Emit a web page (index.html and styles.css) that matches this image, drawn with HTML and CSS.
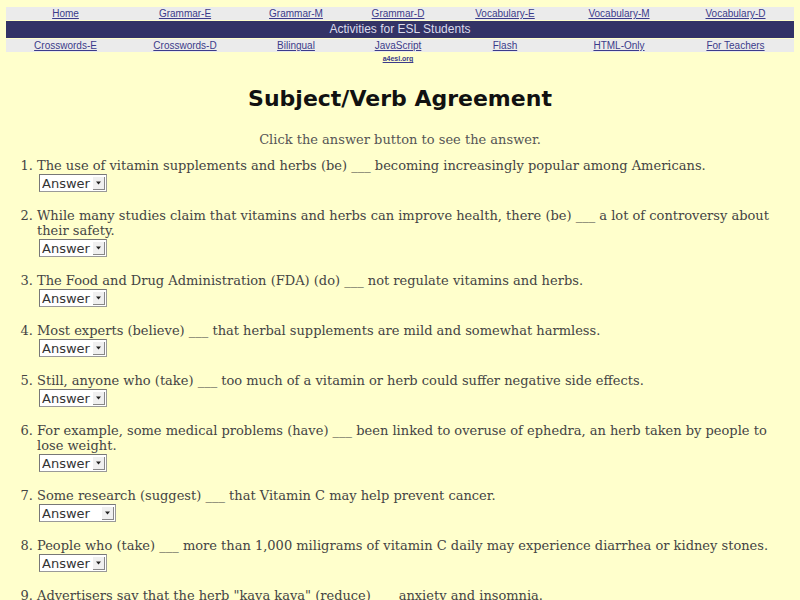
FILE: index.html
```html
<!DOCTYPE html>
<html>
<head>
<meta charset="utf-8">
<title>Subject/Verb Agreement</title>
<link rel="stylesheet" href="styles.css">
</head>
<body>
<nav class="nav">
  <a class="cell" href="#">Home</a>
  <a class="cell" href="#">Grammar-E</a>
  <a class="cell" href="#">Grammar-M</a>
  <a class="cell" href="#">Grammar-D</a>
  <a class="cell" href="#">Vocabulary-E</a>
  <a class="cell" href="#">Vocabulary-M</a>
  <a class="cell" href="#">Vocabulary-D</a>
  <div class="band">Activities for ESL Students</div>
  <a class="cell" href="#">Crosswords-E</a>
  <a class="cell" href="#">Crosswords-D</a>
  <a class="cell" href="#">Bilingual</a>
  <a class="cell" href="#">JavaScript</a>
  <a class="cell" href="#">Flash</a>
  <a class="cell" href="#">HTML-Only</a>
  <a class="cell" href="#">For Teachers</a>
  <a class="site" href="#">a4esl.org</a>
</nav>

<h1 class="title">Subject/Verb Agreement</h1>
<p class="intro">Click the answer button to see the answer.</p>

<ol class="quiz">
  <li>The use of vitamin supplements and herbs (be) ___ becoming increasingly popular among Americans.
    <span class="pick"><select><option>Answer</option><option>is</option></select><span class="arrow"><svg width="7" height="4" viewBox="0 0 7 4"><path d="M1 0.5h5L3.5 3.5z" fill="#222"/></svg></span></span></li>
  <li>While many studies claim that vitamins and herbs can improve health, there (be) ___ a lot of controversy about their safety.
    <span class="pick"><select><option>Answer</option><option>is</option></select><span class="arrow"><svg width="7" height="4" viewBox="0 0 7 4"><path d="M1 0.5h5L3.5 3.5z" fill="#222"/></svg></span></span></li>
  <li>The Food and Drug Administration (FDA) (do) ___ not regulate vitamins and herbs.
    <span class="pick"><select><option>Answer</option><option>does</option></select><span class="arrow"><svg width="7" height="4" viewBox="0 0 7 4"><path d="M1 0.5h5L3.5 3.5z" fill="#222"/></svg></span></span></li>
  <li>Most experts (believe) ___ that herbal supplements are mild and somewhat harmless.
    <span class="pick"><select><option>Answer</option><option>believe</option></select><span class="arrow"><svg width="7" height="4" viewBox="0 0 7 4"><path d="M1 0.5h5L3.5 3.5z" fill="#222"/></svg></span></span></li>
  <li>Still, anyone who (take) ___ too much of a vitamin or herb could suffer negative side effects.
    <span class="pick"><select><option>Answer</option><option>takes</option></select><span class="arrow"><svg width="7" height="4" viewBox="0 0 7 4"><path d="M1 0.5h5L3.5 3.5z" fill="#222"/></svg></span></span></li>
  <li>For example, some medical problems (have) ___ been linked to overuse of ephedra, an herb taken by people to lose weight.
    <span class="pick"><select><option>Answer</option><option>have</option></select><span class="arrow"><svg width="7" height="4" viewBox="0 0 7 4"><path d="M1 0.5h5L3.5 3.5z" fill="#222"/></svg></span></span></li>
  <li>Some research (suggest) ___ that Vitamin C may help prevent cancer.
    <span class="pick wide"><select><option>Answer</option><option>suggests</option></select><span class="arrow"><svg width="7" height="4" viewBox="0 0 7 4"><path d="M1 0.5h5L3.5 3.5z" fill="#222"/></svg></span></span></li>
  <li>People who (take) ___ more than 1,000 miligrams of vitamin C daily may experience diarrhea or kidney stones.
    <span class="pick"><select><option>Answer</option><option>take</option></select><span class="arrow"><svg width="7" height="4" viewBox="0 0 7 4"><path d="M1 0.5h5L3.5 3.5z" fill="#222"/></svg></span></span></li>
  <li>Advertisers say that the herb "kava kava" (reduce) ___ anxiety and insomnia.
    <span class="pick"><select><option>Answer</option><option>reduces</option></select><span class="arrow"><svg width="7" height="4" viewBox="0 0 7 4"><path d="M1 0.5h5L3.5 3.5z" fill="#222"/></svg></span></span></li>
</ol>
</body>
</html>
```

FILE: styles.css
```css
html, body {
  margin: 0;
  padding: 0;
  background: #ffffcc;
}
body {
  padding: 7px 6px 0 6px;
  font-family: "DejaVu Serif", serif;
  color: #444;
}
.nav {
  display: grid;
  grid-template-columns: 119px 120px 102px 102px 112px 116px 1fr;
  row-gap: 1px;
  font-family: "Liberation Sans", Arial, sans-serif;
}
.cell {
  display: block;
  background: #ebebeb;
  text-align: center;
  font-size: 10px;
  line-height: 13px;
  height: 13px;
  color: #3b3b8a;
  text-decoration: underline;
}
.band {
  grid-column: 1 / -1;
  background: #333366;
  color: #dcdcec;
  text-align: center;
  font-size: 12px;
  line-height: 17px;
  height: 17px;
}
.site {
  grid-column: 4;
  text-align: center;
  font-size: 7px;
  line-height: 9px;
  font-weight: bold;
  color: #3b3b8a;
  text-decoration: underline;
  padding-top: 1px;
}
.title {
  margin: 21px 0 0 0;
  text-align: center;
  font-family: "DejaVu Sans", sans-serif;
  font-weight: bold;
  font-size: 22px;
  line-height: 30px;
  color: #111;
}
.intro {
  margin: 18px 0 0 0;
  text-align: center;
  font-size: 13px;
  line-height: 15px;
  color: #555;
}
.quiz {
  margin: 11px 0 0 0;
  padding-left: 31px;
  font-size: 13px;
  line-height: 15px;
}
.quiz li {
  margin-bottom: 16px;
  padding-left: 0;
}
.pick {
  position: relative;
  display: block;
  width: 68px;
  height: 18px;
  margin-top: 1px;
  margin-left: 2px;
}
.pick.wide { width: 77px; }
.pick select {
  appearance: none;
  -webkit-appearance: none;
  width: 100%;
  height: 18px;
  margin: 0;
  padding: 0 0 0 2px;
  border: 1px solid #999;
  border-top-color: #777;
  border-left-color: #777;
  border-radius: 0;
  background: #fff;
  font-family: "DejaVu Sans", sans-serif;
  font-size: 13px;
  color: #333;
}
.arrow {
  position: absolute;
  right: 2px;
  top: 3px;
  width: 11px;
  height: 12px;
  background: #f0f0f0;
  border-right: 1px solid #888;
  border-bottom: 1px solid #888;
  display: flex;
  align-items: center;
  justify-content: center;
}
```
